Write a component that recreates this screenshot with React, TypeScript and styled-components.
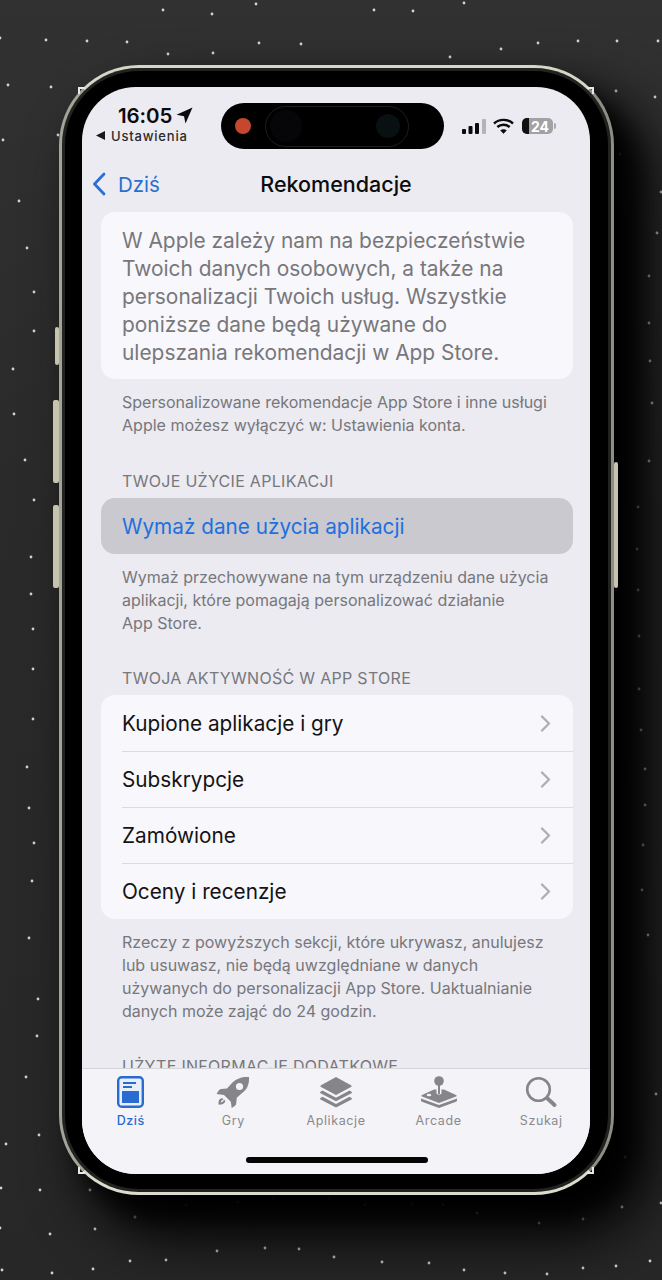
import React from "react";
import styled, { createGlobalStyle } from "styled-components";

const Global = createGlobalStyle`
  html, body { margin: 0; padding: 0; background: #2b2b2b; }
  body { font-family: Inter, "Noto Sans", sans-serif; -webkit-font-smoothing: antialiased; }
`;

const STARS: [number, number][] = [
  [0,38],[46,40],[87,41],[127,42],[163,10],[212,14],[256,4],[168,54],[213,53],[259,43],[301,44],[374,10],[413,11],[464,3],[450,57],[501,49],[538,43],[578,41],[617,41],[658,41],
  [40,1190],[90,1190],[186,1205],[238,1202],[273,1198],[329,1198],[365,1205],[412,1204],[443,1205],[477,1213],[539,1223],[583,1219],[622,1207],[135,1217],[95,1229],[50,1234],[0,1228],[217,1251],[265,1248],[299,1249],[334,1257],[382,1262],[429,1263],[464,1270],[505,1273],[547,1274],[583,1268],[616,1266],[650,1261],[130,1261],[166,1260],[93,1269],[52,1273],[2,1270],[661,1203],
  [8,85],[51,87],[3,140],[58,135],[19,201],[27,248],[34,292],[34,331],[13,369],[14,414],[25,460],[34,500],[31,557],[31,594],
  [33,629],[33,669],[33,719],[27,767],[29,808],[34,843],[32,881],[29,938],[38,999],[37,1036],[26,1077],[39,1135],[6,1144],[1,1188],
  [616,91],[655,97],[620,154],[661,192],[657,233],[649,276],[649,323],[650,361],[652,403],[649,461],[638,507],[637,549],[638,590],
  [639,636],[639,689],[641,730],[645,769],[645,805],[643,845],[642,890],[648,935],[656,1094],[625,1157],
];

const Page = styled.div`
  position: relative;
  width: 662px;
  height: 1280px;
  overflow: hidden;
  padding: 65px 0 0 59px;
  box-sizing: border-box;
  background: linear-gradient(180deg, #313131 0%, #2a2a2a 40%, #272727 100%);
`;
const StarField = styled.svg`
  position: absolute;
  left: 0;
  top: 0;
`;
const Phone = styled.div`
  position: relative;
  width: 555px;
  height: 1130px;
  box-sizing: border-box;
  border-style: solid;
  border-width: 3px;
  border-color: #d6d5c6 #8f8e85 #dcdbcc #a4a398;
  border-radius: 80px;
  padding: 19px 21px 18px 20px;
  background: #000;
  box-shadow:
    inset 0 0 0 3px #222220,
    20px 22px 24px 0 rgba(0, 0, 0, 0.9),
    34px 38px 60px 6px rgba(0, 0, 0, 0.9);
`;
const SideButton = styled.span<{ $left?: number; $right?: number; $top: number; $h: number; $w: number }>`
  position: absolute;
  ${(p) => (p.$left !== undefined ? `left: ${p.$left}px;` : `right: ${p.$right}px;`)}
  top: ${(p) => p.$top}px;
  width: ${(p) => p.$w}px;
  height: ${(p) => p.$h}px;
  background: #c6c4ae;
  border-radius: 2px;
`;
const CornerTick = styled.span<{ $x: "left" | "right"; $y: "top" | "bottom" }>`
  position: absolute;
  ${(p) => (p.$x === "left" ? "left: 16px;" : "right: 17px;")}
  ${(p) => (p.$y === "top" ? "top: 19px;" : "bottom: 18px;")}
  width: 5px;
  height: 5px;
  ${(p) => `border-${p.$x}: 2px solid #e8e8e8; border-${p.$y}: 2px solid #e8e8e8;`}
`;
const Screen = styled.div`
  position: relative;
  width: 508px;
  height: 1087px;
  border-radius: 54px;
  overflow: hidden;
  background: #ebebf1;
`;
const StatusBar = styled.div`
  display: flex;
  align-items: flex-start;
  height: 75px;
  box-sizing: border-box;
  padding: 16px 0 0 14px;
`;
const StatusLeft = styled.div`
  width: 125px;
  color: #0b0b0d;
`;
const TimeRow = styled.div`
  display: flex;
  align-items: center;
  gap: 4px;
  height: 25px;
  margin-left: 22px;
  font-size: 20.5px;
  font-weight: 600;
  letter-spacing: -0.1px;
`;
const BackRow = styled.div`
  display: flex;
  align-items: center;
  gap: 5px;
  height: 15px;
  font-size: 13px;
  font-weight: 500;
  letter-spacing: 0.8px;
  color: #2a2a2c;
`;
const Island = styled.div`
  display: flex;
  align-items: center;
  width: 223px;
  height: 46px;
  box-sizing: border-box;
  padding-left: 14px;
  border-radius: 23px;
  background: #000;
`;
const RecordDot = styled.span`
  width: 16px;
  height: 16px;
  border-radius: 50%;
  background: #c5472e;
`;
const IslandInner = styled.div`
  display: flex;
  align-items: center;
  justify-content: space-between;
  width: 144px;
  height: 41px;
  box-sizing: border-box;
  margin-left: 14px;
  padding: 0 8px 0 4px;
  border: 1px solid #1e1e1e;
  border-radius: 21px;
`;
const Lens = styled.span<{ $d: number; $c: string }>`
  width: ${(p) => p.$d}px;
  height: ${(p) => p.$d}px;
  border-radius: 50%;
  background: ${(p) => p.$c};
`;
const StatusRight = styled.div`
  display: flex;
  align-items: center;
  height: 46px;
  margin-left: 18px;
`;
const WifiIcon = styled.svg`
  margin-left: 7px;
`;
const Battery = styled.div`
  position: relative;
  display: flex;
  align-items: center;
  justify-content: center;
  width: 31px;
  height: 16px;
  margin-left: 8px;
  overflow: hidden;
  border-radius: 5px;
  background: #a2a2a6;
  color: #fff;
  font-size: 14px;
  font-weight: 700;
`;
const BatteryFill = styled.span`
  position: absolute;
  left: 0;
  top: 0;
  bottom: 0;
  width: 7px;
  background: #111;
`;
const BatteryLabel = styled.span`
  position: relative;
  margin-left: 5px;
`;
const BatteryTip = styled.span`
  width: 2px;
  height: 6px;
  margin-left: 1px;
  border-radius: 0 2px 2px 0;
  background: #a8a8ac;
`;
const NavBar = styled.div`
  display: grid;
  grid-template-columns: 1fr auto 1fr;
  align-items: center;
  height: 44px;
  margin-bottom: 6px;
  padding-left: 10px;
`;
const NavBack = styled.div`
  display: flex;
  align-items: center;
  gap: 12px;
  color: #2a6fd2;
  font-size: 20.5px;
`;
const NavTitle = styled.div`
  margin-left: -10px;
  color: #0c0c0e;
  font-size: 21.5px;
  font-weight: 500;
`;
const Content = styled.div`
  padding: 0 17px 0 19px;
`;
const IntroCard = styled.div`
  box-sizing: border-box;
  height: 167px;
  padding: 15px 21px 0;
  border-radius: 14px;
  background: #f8f7fb;
  color: #77777b;
  font-size: 20.9px;
  line-height: 28px;
  white-space: nowrap;
`;
const Footnote = styled.div<{ $mb: number }>`
  padding: 12px 21px 0;
  margin-bottom: ${(p) => p.$mb}px;
  color: #77777c;
  font-size: 16.04px;
  line-height: 23px;
  white-space: nowrap;
`;
const SectionHeader = styled.div`
  height: 23px;
  padding-left: 21px;
  margin-bottom: 5px;
  color: #77777c;
  font-size: 16px;
  letter-spacing: 0.3px;
  line-height: 23px;
  white-space: nowrap;
`;
const Group = styled.div`
  overflow: hidden;
  border-radius: 14px;
  background: #f8f7fb;
`;
const Row = styled.div<{ $active?: boolean }>`
  display: flex;
  align-items: center;
  justify-content: space-between;
  height: 56px;
  box-sizing: border-box;
  padding: 0 22px 0 21px;
  font-size: 20.75px;
  color: ${(p) => (p.$active ? "#1f6fdf" : "#131315")};
  background: ${(p) => (p.$active ? "#c9c9cf" : "transparent")};
  border-radius: ${(p) => (p.$active ? "14px" : "0")};
  position: relative;
  & + &::before {
    content: "";
    position: absolute;
    left: 21px;
    right: 0;
    top: 0;
    height: 1px;
    background: #dcdce0;
  }
`;
const TabBar = styled.div`
  position: absolute;
  left: -2.5px;
  right: -2.5px;
  bottom: 0;
  height: 106px;
  box-sizing: border-box;
  display: grid;
  grid-template-columns: repeat(5, 1fr);
  padding: 7px 0 0;
  border-top: 1px solid #d6d6d9;
  background: #f4f3f7;
`;
const Tab = styled.div<{ $active?: boolean }>`
  display: flex;
  flex-direction: column;
  align-items: center;
  color: ${(p) => (p.$active ? "#2a6bd2" : "#8a8a8e")};
  font-size: 12.5px;
  font-weight: ${(p) => (p.$active ? 500 : 400)};
  letter-spacing: 0.6px;
`;
const TabIcon = styled.div`
  display: flex;
  align-items: center;
  justify-content: center;
  height: 32px;
`;
const TabLabel = styled.div`
  margin-top: 5px;
  line-height: 16px;
`;
const HomeIndicator = styled.div`
  position: absolute;
  left: 166.5px;
  bottom: 11px;
  width: 182px;
  height: 6px;
  border-radius: 3px;
  background: #050505;
`;

const Chevron = () => (
  <svg width="11" height="17" viewBox="0 0 11 17" fill="none">
    <path d="M2 1.5 9 8.5 2 15.5" stroke="#adadb2" strokeWidth="2.2" strokeLinecap="round" strokeLinejoin="round" />
  </svg>
);

const TodayIcon = () => (
  <svg width="27" height="32" viewBox="0 0 27 32">
    <rect x="1.2" y="1.2" width="24.6" height="29.6" rx="3.5" fill="#e8eefa" stroke="#2a6bd2" strokeWidth="2.4" />
    <rect x="6" y="6" width="13" height="2" fill="#2a6bd2" />
    <rect x="6" y="10" width="9" height="2" fill="#2a6bd2" />
    <rect x="5" y="15" width="17" height="12" rx="0.5" fill="#2a6bd2" />
  </svg>
);
const RocketIcon = () => (
  <svg width="34" height="32" viewBox="0 0 34 32" fill="#86868a">
    <path d="M33 1c-6-.6-12 1-17 6l-5 5.5-6 .6c-1 .2-2 1-2.6 1.8L0.6 18l7.4.9 6.8 6.9.9 6.3 3-2c.8-.6 1.4-1.5 1.5-2.6l.6-5.8 5.6-5C31.5 13 33.4 7.500 33 1z" />
    <path d="M6.400 22c-2.200.3-3.600 1.700-3.800 3.800-.1.900-.1 2-.1 2.800 1 .1 2 .1 3-.1 2-.3 3.500-1.600 3.800-3.700l-1.500-1.400c-.2 1.500-.9 2.700-2.900 3 .2-1.800 1.100-2.600 2.300-3z" />
    <circle cx="23.500" cy="10.500" r="3.600" fill="#f4f3f7" />
  </svg>
);
const LayersIcon = () => (
  <svg width="34" height="32" viewBox="0 0 34 32" fill="#86868a">
    <path d="M17 1 32 9.200c.8.500.8 1.400 0 1.900L17 19 2 11.100c-.8-.5-.8-1.400 0-1.900z" />
    <path d="M3.500 14.400 17 21.700l13.500-7.300 2 1.300c.6.400.6 1.100 0 1.500L17 25.300 1.500 17.200c-.6-.4-.6-1.100 0-1.500z" />
    <path d="M3.500 20.800 17 28l13.500-7.200 2 1.200c.6.400.6 1.100 0 1.500L17 31.600 1.500 23.500c-.6-.4-.6-1.100 0-1.500z" />
  </svg>
);
const ArcadeIcon = () => (
  <svg width="38" height="32" viewBox="0 0 38 32" fill="#86868a">
    <circle cx="19" cy="5" r="4.800" />
    <rect x="18" y="9" width="2" height="9" />
    <path d="M14 13.500 2 19c-.8.400-.8 1.200 0 1.600L19 27l17-6.400c.8-.4.8-1.200 0-1.600L24 13.500l-2.500.1v4c-1 1.300-4 1.300-5 0v-4z" />
    <path d="M1 22.500 19 29l18-6.500v2c0 .5-.3 1-1 1.300L19 32 2 25.800c-.7-.3-1-.8-1-1.300z" />
    <ellipse cx="9" cy="19" rx="2.300" ry="1.300" fill="#f4f3f7" />
  </svg>
);
const SearchIcon = () => (
  <svg width="32" height="32" viewBox="0 0 32 32" fill="none" stroke="#86868a">
    <circle cx="13.500" cy="13.500" r="11.300" strokeWidth="2.600" />
    <path d="M22.500 22.500 29.500 29" strokeWidth="3.800" strokeLinecap="round" />
  </svg>
);

const tabs: { label: string; icon: React.ReactNode; active?: boolean }[] = [
  { label: "Dziś", icon: <TodayIcon />, active: true },
  { label: "Gry", icon: <RocketIcon /> },
  { label: "Aplikacje", icon: <LayersIcon /> },
  { label: "Arcade", icon: <ArcadeIcon /> },
  { label: "Szukaj", icon: <SearchIcon /> },
];

const Lines = ({ items }: { items: string[] }) => (
  <>
    {items.map((t) => (
      <div key={t}>{t}</div>
    ))}
  </>
);

export default function App() {
  return (
    <Page>
      <Global />
      <StarField width="662" height="1280" viewBox="0 0 662 1280">
        {STARS.map(([x, y]) => (
          <circle key={`${x}-${y}`} cx={x} cy={y} r="1.400" fill="#d4d4d4" />
        ))}
      </StarField>
      <Phone>
        <SideButton $left={-7} $top={259} $w={4} $h={38} />
        <SideButton $left={-9} $top={332} $w={6} $h={83} />
        <SideButton $left={-9} $top={437} $w={6} $h={83} />
        <SideButton $right={-7} $top={394} $w={4} $h={126} />
        <CornerTick $x="left" $y="top" />
        <CornerTick $x="right" $y="top" />
        <CornerTick $x="left" $y="bottom" />
        <CornerTick $x="right" $y="bottom" />
        <Screen>
          <StatusBar>
            <StatusLeft>
              <TimeRow>
                16:05
                <svg width="17" height="17" viewBox="0 0 17 17" fill="#0b0b0d">
                  <path d="M16.500.5 9.500 16.500 8 9.200.5 7.800z" />
                </svg>
              </TimeRow>
              <BackRow>
                <svg width="10" height="9" viewBox="0 0 10 9" fill="#1a1a1c">
                  <path d="M9 0v9L0 4.500z" />
                </svg>
                Ustawienia
              </BackRow>
            </StatusLeft>
            <Island>
              <RecordDot />
              <IslandInner>
                <Lens $d={32} $c="#060608" />
                <Lens $d={24} $c="#081012" />
              </IslandInner>
            </Island>
            <StatusRight>
              <svg width="24" height="15" viewBox="0 0 24 15">
                <rect x="0" y="10" width="4" height="5" rx="1" fill="#0b0b0d" />
                <rect x="6.500" y="7" width="4" height="8" rx="1" fill="#0b0b0d" />
                <rect x="13" y="4" width="4" height="11" rx="1" fill="#0b0b0d" />
                <rect x="20" y="0" width="4" height="15" rx="1" fill="#b4b4b8" />
              </svg>
              <WifiIcon width="21" height="16" viewBox="0 0 21 16" fill="none" stroke="#0b0b0d" strokeWidth="2.400">
                <path d="M1 5.500c5.300-4.800 13.700-4.800 19 0" />
                <path d="M4.300 9c3.500-3 8.900-3 12.400 0" />
                <path d="M10.500 15.500 7.600 12.400c1.700-1.300 4.100-1.300 5.800 0z" fill="#0b0b0d" strokeWidth="0.500" />
              </WifiIcon>
              <Battery>
                <BatteryFill />
                <BatteryLabel>24</BatteryLabel>
              </Battery>
              <BatteryTip />
            </StatusRight>
          </StatusBar>
          <NavBar>
            <NavBack>
              <svg width="14" height="24" viewBox="0 0 14 24" fill="none">
                <path d="M12 2 2.500 12 12 22" stroke="#2a6fd2" strokeWidth="2.800" strokeLinecap="round" strokeLinejoin="round" />
              </svg>
              Dziś
            </NavBack>
            <NavTitle>Rekomendacje</NavTitle>
            <div />
          </NavBar>
          <Content>
            <IntroCard>
              <Lines
                items={[
                  "W Apple zależy nam na bezpieczeństwie",
                  "Twoich danych osobowych, a także na",
                  "personalizacji Twoich usług. Wszystkie",
                  "poniższe dane będą używane do",
                  "ulepszania rekomendacji w App Store.",
                ]}
              />
            </IntroCard>
            <Footnote $mb={33}>
              <Lines
                items={[
                  "Spersonalizowane rekomendacje App Store i inne usługi",
                  "Apple możesz wyłączyć w: Ustawienia konta.",
                ]}
              />
            </Footnote>
            <SectionHeader>TWOJE UŻYCIE APLIKACJI</SectionHeader>
            <Row $active>Wymaż dane użycia aplikacji</Row>
            <Footnote $mb={32}>
              <Lines
                items={[
                  "Wymaż przechowywane na tym urządzeniu dane użycia",
                  "aplikacji, które pomagają personalizować działanie",
                  "App Store.",
                ]}
              />
            </Footnote>
            <SectionHeader>TWOJA AKTYWNOŚĆ W APP STORE</SectionHeader>
            <Group>
              {["Kupione aplikacje i gry", "Subskrypcje", "Zamówione", "Oceny i recenzje"].map((t) => (
                <Row key={t}>
                  {t}
                  <Chevron />
                </Row>
              ))}
            </Group>
            <Footnote $mb={32}>
              <Lines
                items={[
                  "Rzeczy z powyższych sekcji, które ukrywasz, anulujesz",
                  "lub usuwasz, nie będą uwzględniane w danych",
                  "używanych do personalizacji App Store. Uaktualnianie",
                  "danych może zająć do 24 godzin.",
                ]}
              />
            </Footnote>
            <SectionHeader>UŻYTE INFORMACJE DODATKOWE</SectionHeader>
          </Content>
          <TabBar>
            {tabs.map((t) => (
              <Tab key={t.label} $active={t.active}>
                <TabIcon>{t.icon}</TabIcon>
                <TabLabel>{t.label}</TabLabel>
              </Tab>
            ))}
            <HomeIndicator />
          </TabBar>
        </Screen>
      </Phone>
    </Page>
  );
}
